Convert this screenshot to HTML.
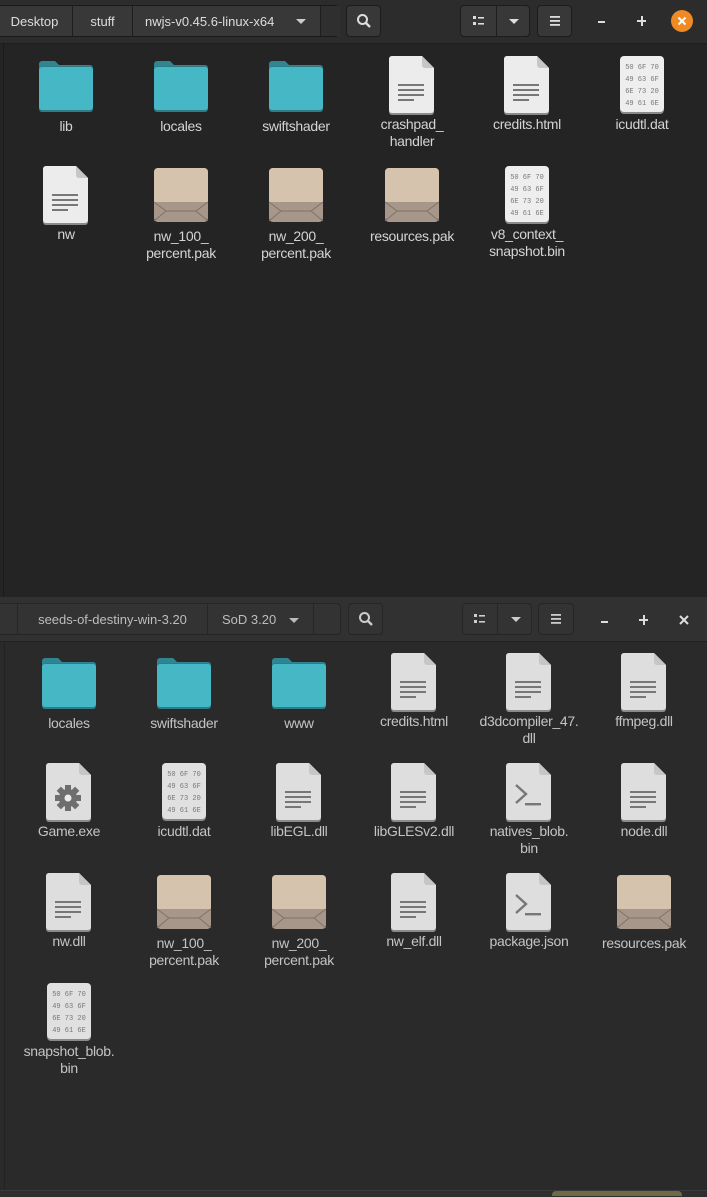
<!DOCTYPE html>
<html><head><meta charset="utf-8">
<style>
html,body{margin:0;padding:0;width:707px;height:1196px;overflow:hidden;background:#282828;font-family:"Liberation Sans",sans-serif;}
.win{position:absolute;left:0;width:707px;}
.hdr{position:absolute;left:0;width:707px;}
.btn{position:absolute;border:1px solid #1c1c1c;border-radius:4px;box-sizing:border-box;color:#ddd;font-size:13px;display:flex;align-items:center;justify-content:center;}
.seg{position:absolute;top:0;bottom:0;border-right:1px solid #1e1e1e;display:flex;align-items:center;justify-content:center;box-sizing:border-box;}
.it{position:absolute;width:112px;text-align:center;}
.it .ic{height:58px;display:flex;justify-content:center;align-items:flex-start;}
.lbl{font-size:14px;line-height:17px;color:#d4d4d4;margin-top:2px;letter-spacing:-0.3px;white-space:nowrap;margin-left:-10px;margin-right:-10px;}
.b2 .lbl{color:#c4c4c4;}
.hex{width:44px;height:56px;background:#eeeeee;border-radius:4px;box-shadow:0 2px 0 #8a8a8a;box-sizing:border-box;padding:6px 3px 0 3px;font-family:"Liberation Mono",monospace;font-size:7px;color:#777;line-height:12px;text-align:center;white-space:pre;}
.b2 .hex{background:#e0e0e0;}
</style></head><body>

<div class="win" style="top:0;height:597px;background:#242424;">
 <div class="hdr" style="top:0;height:43px;background:#2c2c2c;border-bottom:1px solid #1e1e1e;">
  <div class="btn" style="left:-4px;top:5px;width:343px;height:32px;background:#383838;border-color:#1a1a1a;">
   <div class="seg" style="left:0;width:76px;">Desktop</div>
   <div class="seg" style="left:76px;width:60px;">stuff</div>
   <div class="seg" style="left:136px;width:188px;justify-content:flex-start;padding-left:12px;">nwjs-v0.45.6-linux-x64<span style="position:absolute;right:14px;top:13px;width:0;height:0;border-left:5px solid transparent;border-right:5px solid transparent;border-top:5px solid #ccc;"></span></div>
   <div class="seg" style="left:324px;width:19px;border:none;background:#2f2f2f;"></div>
  </div>
  <div class="btn" style="left:346px;top:5px;width:35px;height:32px;background:#383838;">
   <svg width="16" height="16" viewBox="0 0 16 16"><circle cx="6.5" cy="6.5" r="4.5" fill="none" stroke="#ddd" stroke-width="2"/><path d="M10 10l4 4" stroke="#ddd" stroke-width="2.4"/></svg></div>
  <div class="btn" style="left:460px;top:5px;width:70px;height:32px;background:#383838;">
   <div class="seg" style="left:0;width:36px;"><svg width="12" height="10"><rect x="0" y="0" width="3" height="3" fill="#ddd"/><rect x="0" y="6" width="3" height="3" fill="#ddd"/><rect x="5" y="1" width="6" height="1.6" fill="#ddd"/><rect x="5" y="7" width="6" height="1.6" fill="#ddd"/></svg></div>
   <div class="seg" style="left:36px;width:34px;border:none;"><span style="width:0;height:0;border-left:5px solid transparent;border-right:5px solid transparent;border-top:5px solid #ddd;"></span></div>
  </div>
  <div class="btn" style="left:537px;top:5px;width:35px;height:32px;background:#383838;"><svg width="10" height="12"><rect y="1" width="10" height="1.8" fill="#ddd"/><rect y="5" width="10" height="1.8" fill="#ddd"/><rect y="9" width="10" height="1.8" fill="#ddd"/></svg></div>
  <div style="position:absolute;left:598px;top:21px;width:7px;height:2px;background:#ddd;"></div>
  <div style="position:absolute;left:637px;top:20px;width:9px;height:2px;background:#ddd;"></div>
  <div style="position:absolute;left:641px;top:16px;width:2px;height:10px;background:#ddd;"></div>
  <div style="position:absolute;left:671px;top:10px;width:22px;height:22px;border-radius:50%;background:#f08a24;"><svg width="22" height="22"><path d="M7.5 7.5l7 7M14.5 7.5l-7 7" stroke="#fff" stroke-width="2"/></svg></div>
 </div>
 <div style="position:absolute;left:3px;top:44px;width:1px;height:553px;background:#1a1a1a;"></div>

 <div class="it" style="left:10px;top:58px;"><div class="ic fo"></div><div class="lbl">lib</div></div>
 <div class="it" style="left:125px;top:58px;"><div class="ic fo"></div><div class="lbl">locales</div></div>
 <div class="it" style="left:240px;top:58px;"><div class="ic fo"></div><div class="lbl">swiftshader</div></div>
 <div class="it" style="left:356px;top:56px;"><div class="ic doc"></div><div class="lbl">crashpad_<br>handler</div></div>
 <div class="it" style="left:471px;top:56px;"><div class="ic doc"></div><div class="lbl">credits.html</div></div>
 <div class="it" style="left:586px;top:56px;"><div class="ic"><div class="hex">50 6F 70
49 63 6F
6E 73 20
49 61 6E</div></div><div class="lbl">icudtl.dat</div></div>

 <div class="it" style="left:10px;top:166px;"><div class="ic doc"></div><div class="lbl">nw</div></div>
 <div class="it" style="left:125px;top:168px;"><div class="ic pak"></div><div class="lbl">nw_100_<br>percent.pak</div></div>
 <div class="it" style="left:240px;top:168px;"><div class="ic pak"></div><div class="lbl">nw_200_<br>percent.pak</div></div>
 <div class="it" style="left:356px;top:168px;"><div class="ic pak"></div><div class="lbl">resources.pak</div></div>
 <div class="it" style="left:471px;top:166px;"><div class="ic"><div class="hex">50 6F 70
49 63 6F
6E 73 20
49 61 6E</div></div><div class="lbl">v8_context_<br>snapshot.bin</div></div>
</div>

<div class="win b2" style="top:597px;height:599px;background:#2a2a2a;">
 <div class="hdr" style="top:0;height:44px;background:#313131;border-bottom:1px solid #222;">
  <div class="btn" style="left:-4px;top:6px;width:345px;height:32px;background:#333;border-color:#262626;color:#bdbdbd;">
   <div class="seg" style="left:0;width:21px;border-color:#262626;"></div>
   <div class="seg" style="left:21px;width:190px;border-color:#262626;">seeds-of-destiny-win-3.20</div>
   <div class="seg" style="left:211px;width:106px;border-color:#262626;justify-content:flex-start;padding-left:14px;">SoD 3.20<span style="position:absolute;right:14px;top:14px;width:0;height:0;border-left:5px solid transparent;border-right:5px solid transparent;border-top:5px solid #bbb;"></span></div>
  </div>
  <div class="btn" style="left:348px;top:6px;width:35px;height:32px;background:#333;border-color:#262626;">
   <svg width="16" height="16" viewBox="0 0 16 16"><circle cx="6.5" cy="6.5" r="4.5" fill="none" stroke="#ccc" stroke-width="2"/><path d="M10 10l4 4" stroke="#ccc" stroke-width="2.4"/></svg></div>
  <div class="btn" style="left:462px;top:6px;width:70px;height:32px;background:#333;border-color:#262626;">
   <div class="seg" style="left:0;width:35px;border-color:#262626;"><svg width="12" height="10"><rect x="0" y="0" width="3" height="3" fill="#ccc"/><rect x="0" y="6" width="3" height="3" fill="#ccc"/><rect x="5" y="1" width="6" height="1.6" fill="#ccc"/><rect x="5" y="7" width="6" height="1.6" fill="#ccc"/></svg></div>
   <div class="seg" style="left:35px;width:35px;border:none;"><span style="width:0;height:0;border-left:5px solid transparent;border-right:5px solid transparent;border-top:5px solid #ccc;"></span></div>
  </div>
  <div class="btn" style="left:538px;top:6px;width:36px;height:32px;background:#333;border-color:#262626;"><svg width="10" height="12"><rect y="1" width="10" height="1.8" fill="#ccc"/><rect y="5" width="10" height="1.8" fill="#ccc"/><rect y="9" width="10" height="1.8" fill="#ccc"/></svg></div>
  <div style="position:absolute;left:601px;top:24px;width:7px;height:2px;background:#ddd;"></div>
  <div style="position:absolute;left:639px;top:22px;width:9px;height:2px;background:#ddd;"></div>
  <div style="position:absolute;left:643px;top:18px;width:2px;height:10px;background:#ddd;"></div>
  <svg style="position:absolute;left:678px;top:17px;" width="12" height="12"><path d="M2 2l8 8M10 2l-8 8" stroke="#ddd" stroke-width="2"/></svg>
 </div>
 <div style="position:absolute;left:4px;top:45px;width:1px;height:548px;background:#222;"></div>

 <div class="it" style="left:13px;top:58px;"><div class="ic fo"></div><div class="lbl">locales</div></div>
 <div class="it" style="left:128px;top:58px;"><div class="ic fo"></div><div class="lbl">swiftshader</div></div>
 <div class="it" style="left:243px;top:58px;"><div class="ic fo"></div><div class="lbl">www</div></div>
 <div class="it" style="left:358px;top:56px;"><div class="ic doc"></div><div class="lbl">credits.html</div></div>
 <div class="it" style="left:473px;top:56px;"><div class="ic doc"></div><div class="lbl">d3dcompiler_47.<br>dll</div></div>
 <div class="it" style="left:588px;top:56px;"><div class="ic doc"></div><div class="lbl">ffmpeg.dll</div></div>

 <div class="it" style="left:13px;top:166px;"><div class="ic exe"></div><div class="lbl">Game.exe</div></div>
 <div class="it" style="left:128px;top:166px;"><div class="ic"><div class="hex">50 6F 70
49 63 6F
6E 73 20
49 61 6E</div></div><div class="lbl">icudtl.dat</div></div>
 <div class="it" style="left:243px;top:166px;"><div class="ic doc"></div><div class="lbl">libEGL.dll</div></div>
 <div class="it" style="left:358px;top:166px;"><div class="ic doc"></div><div class="lbl">libGLESv2.dll</div></div>
 <div class="it" style="left:473px;top:166px;"><div class="ic term"></div><div class="lbl">natives_blob.<br>bin</div></div>
 <div class="it" style="left:588px;top:166px;"><div class="ic doc"></div><div class="lbl">node.dll</div></div>

 <div class="it" style="left:13px;top:276px;"><div class="ic doc"></div><div class="lbl">nw.dll</div></div>
 <div class="it" style="left:128px;top:278px;"><div class="ic pak"></div><div class="lbl">nw_100_<br>percent.pak</div></div>
 <div class="it" style="left:243px;top:278px;"><div class="ic pak"></div><div class="lbl">nw_200_<br>percent.pak</div></div>
 <div class="it" style="left:358px;top:276px;"><div class="ic doc"></div><div class="lbl">nw_elf.dll</div></div>
 <div class="it" style="left:473px;top:276px;"><div class="ic term"></div><div class="lbl">package.json</div></div>
 <div class="it" style="left:588px;top:278px;"><div class="ic pak"></div><div class="lbl">resources.pak</div></div>

 <div class="it" style="left:13px;top:386px;"><div class="ic"><div class="hex">50 6F 70
49 63 6F
6E 73 20
49 61 6E</div></div><div class="lbl">snapshot_blob.<br>bin</div></div>

 <div style="position:absolute;left:0;top:593px;width:707px;height:6px;background:#2e2e2e;border-top:1px solid #3a3a3a;"></div>
 <div style="position:absolute;left:552px;top:594px;width:130px;height:5px;background:#6e6a48;border-radius:4px 4px 0 0;"></div>
</div>

<script>
var FO='<svg width="56" height="56" viewBox="0 0 56 56"><path d="M1 6a3 3 0 0 1 3-3h13l4 4h31a3 3 0 0 1 3 3v6H1z" fill="#2f8592"/><rect x="1" y="8" width="54" height="46" rx="3" fill="#2f7c86"/><rect x="1" y="9" width="54" height="43" rx="3" fill="#46b7c4"/></svg>';
var DOCB='<svg width="48" height="60" viewBox="0 0 48 60"><path d="M4 0h30l12 12v44a3 3 0 0 1-3 3H4a3 3 0 0 1-3-3V3a3 3 0 0 1 3-3z" fill="#8a8a8a"/><path d="M4 0h30l12 12v42a3 3 0 0 1-3 3H4a3 3 0 0 1-3-3V3a3 3 0 0 1 3-3z" fill="#ececec"/><path d="M34 0v9a3 3 0 0 0 3 3h9z" fill="#c6c6c6"/>';
var DOC=DOCB+'<g fill="#777"><rect x="10" y="28" width="26" height="2"/><rect x="10" y="33" width="26" height="2"/><rect x="10" y="38" width="26" height="2"/><rect x="10" y="43" width="16" height="2"/></g></svg>';
var TERM=DOCB+'<path d="M11 22l10 9-10 9" fill="none" stroke="#777" stroke-width="2.4"/><rect x="20" y="40" width="16" height="2.4" fill="#777"/></svg>';
var EXE=DOCB+'<g transform="translate(23 35)" fill="#6e6e6e"><circle r="9"/><g><rect x="-3" y="-13" width="6" height="26"/><rect x="-13" y="-3" width="26" height="6"/><rect x="-3" y="-13" width="6" height="26" transform="rotate(45)"/><rect x="-3" y="-13" width="6" height="26" transform="rotate(-45)"/></g><circle r="3.5" fill="#ececec"/></g></svg>';
var PAK='<svg width="56" height="54" viewBox="0 0 56 54"><rect x="1" y="0" width="54" height="54" rx="4" fill="#a6978a"/><path d="M5 0h46a4 4 0 0 1 4 4v30H1V4a4 4 0 0 1 4-4z" fill="#d6c3ae"/><path d="M1 34l12 9h30l12-9M1 53l12-10M55 53l-12-10" fill="none" stroke="#7f7266" stroke-width="1"/></svg>';
function fill(c,h){document.querySelectorAll('.'+c).forEach(function(e){e.innerHTML=h;});}
fill('fo',FO);fill('doc',DOC);fill('term',TERM);fill('exe',EXE);fill('pak',PAK);
document.querySelectorAll('.b2 .doc svg,.b2 .term svg,.b2 .exe svg').forEach(function(s){s.querySelectorAll('path')[1].setAttribute('fill','#dedede');});
</script>
</body></html>
